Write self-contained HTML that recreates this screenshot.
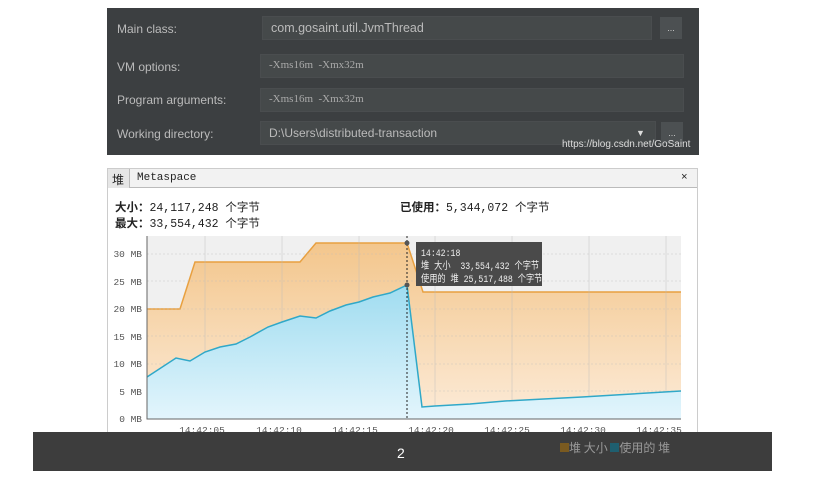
<!DOCTYPE html><html><head><meta charset="utf-8"><style>
*{margin:0;padding:0;box-sizing:border-box}
body{width:815px;height:483px;background:#fff;position:relative;overflow:hidden;font-family:"Liberation Sans","Noto Sans CJK SC",sans-serif}
.a{position:absolute}
.dk{left:107px;top:8px;width:592px;height:147px;background:#3c3f41}
.lb{color:#bbb;font-size:12px;left:117px}
.fd{background:#45494a;border:1px solid #4a4d4f;height:24px;color:#bbb;font-size:12px;padding:4px 8px}
.mono{font-family:"Liberation Serif","Noto Sans CJK SC",serif}
.bt{background:#4c5052;width:22px;height:22px;color:#ccc;font-size:9px;text-align:center;line-height:22px}
.cj{font-family:"Liberation Mono","Noto Sans CJK SC",monospace;font-size:11px;color:#222}
.tt{left:421px;width:200px;color:#eee;font-size:10px;line-height:13px;white-space:pre;font-family:"Liberation Mono","Noto Sans CJK SC",monospace;transform:scaleX(0.82);transform-origin:0 0}
</style></head><body>
<div class="a dk"></div>
<div class="a lb" style="top:22px">Main class:</div>
<div class="a fd" style="left:262px;top:16px;width:390px;font-size:12.5px">com.gosaint.util.JvmThread</div>
<div class="a bt" style="left:660px;top:17px">...</div>
<div class="a lb" style="top:60px">VM options:</div>
<div class="a fd mono" style="left:260px;top:54px;width:424px;color:#aaa;font-size:11px">-Xms16m &nbsp;-Xmx32m</div>
<div class="a lb" style="top:93px">Program arguments:</div>
<div class="a fd mono" style="left:260px;top:88px;width:424px;color:#aaa;font-size:11px">-Xms16m &nbsp;-Xmx32m</div>
<div class="a lb" style="top:127px">Working directory:</div>
<div class="a fd" style="left:260px;top:121px;width:396px">D:\Users\distributed-transaction</div>
<div class="a" style="left:636px;top:128px;color:#ddd;font-size:9px">▼</div>
<div class="a bt" style="left:661px;top:122px">...</div>
<div class="a" style="left:562px;top:139px;color:#ddd;font-size:10px">https://blog.csdn.net/GoSaint</div>

<div class="a" style="left:107px;top:168px;width:591px;height:303px;border:1px solid #ccc"></div>
<div class="a" style="left:108px;top:169px;width:589px;height:19px;background:#f2f2f2;border-bottom:1px solid #bbb"></div>
<div class="a cj" style="left:108px;top:169px;width:22px;height:19px;border-right:1px solid #bbb;background:#e6e6e6;padding:2px 4px;font-size:12px">堆</div>
<div class="a cj" style="left:137px;top:172px">Metaspace</div>
<div class="a cj" style="left:681px;top:172px">×</div>
<div class="a cj" style="left:115px;top:199px;font-size:11.5px"><b>大小：</b>24,117,248 个字节</div>
<div class="a cj" style="left:115px;top:215px;font-size:11.5px"><b>最大：</b>33,554,432 个字节</div>
<div class="a cj" style="left:400px;top:199px;font-size:11.5px"><b>已使用：</b>5,344,072 个字节</div>

<svg class="a" style="left:0;top:0" width="815" height="483">
<defs>
<linearGradient id="o" x1="0" y1="0" x2="0" y2="1"><stop offset="0" stop-color="#f3c68c"/><stop offset="1" stop-color="#fcebd8"/></linearGradient>
<linearGradient id="b" x1="0" y1="0" x2="0" y2="1"><stop offset="0" stop-color="#9fdcf0"/><stop offset="1" stop-color="#e3f5fc"/></linearGradient>
</defs>
<rect x="147" y="236" width="534" height="183" fill="#f0f0f0"/>
<path d="M147,419V309H180L195,262H300L316,243H407L423,292H681V419Z" fill="url(#o)" stroke="none"/>
<path d="M147,309H180L195,262H300L316,243H407L423,292H681" fill="none" stroke="#e8a040" stroke-width="1.5"/>
<g stroke="#bbb" stroke-width="0.6" opacity="0.7">
<path d="M205,236V419M282,236V419M359,236V419M435,236V419M512,236V419M589,236V419M666,236V419"/>
<path d="M147,254H681M147,281H681M147,309H681M147,336H681M147,364H681M147,391H681" stroke-dasharray="2,2"/>
</g>
<path d="M147,377L176,358L190,361L205,352L220,347L236,344L250,337L268,327L282,322L300,316L316,318L330,311L346,305L359,302L373,297L390,293L407,285L422,407L435,406L470,404L505,401L582,397L681,391V419H147Z" fill="url(#b)"/>
<path d="M147,377L176,358L190,361L205,352L220,347L236,344L250,337L268,327L282,322L300,316L316,318L330,311L346,305L359,302L373,297L390,293L407,285L422,407L435,406L470,404L505,401L582,397L681,391" fill="none" stroke="#30a8c8" stroke-width="1.5"/>
<path d="M147,236V419H681" fill="none" stroke="#666"/>
<line x1="407" y1="236" x2="407" y2="419" stroke="#222" stroke-dasharray="2,2"/>
<circle cx="407" cy="243" r="2.5" fill="#555"/><circle cx="407" cy="285" r="2.5" fill="#555"/>
<g font-family="Liberation Mono,monospace" font-size="9.5" fill="#555" text-anchor="end">
<text x="142" y="257">30 MB</text><text x="142" y="285">25 MB</text><text x="142" y="312">20 MB</text><text x="142" y="340">15 MB</text><text x="142" y="367">10 MB</text><text x="142" y="395">5 MB</text><text x="142" y="422">0 MB</text>
</g>
<g font-family="Liberation Mono,monospace" font-size="9.5" fill="#555" text-anchor="middle">
<text x="202" y="433">14:42:05</text><text x="279" y="433">14:42:10</text><text x="355" y="433">14:42:15</text><text x="431" y="433">14:42:20</text><text x="507" y="433">14:42:25</text><text x="583" y="433">14:42:30</text><text x="659" y="433">14:42:35</text>
</g>
<rect x="416" y="242" width="126" height="44" fill="#4a4a4a"/>
</svg>
<div class="a tt" style="top:248px">14:42:18
堆 大小  33,554,432 个字节
使用的 堆 25,517,488 个字节</div>
<div class="a" style="left:33px;top:432px;width:739px;height:39px;background:#3d3d3d"></div>
<div class="a" style="left:397px;top:445px;color:#fff;font-size:14px">2</div>
<div class="a" style="left:560px;top:439px;color:#999;font-size:12px;font-family:'Noto Sans CJK SC',sans-serif;white-space:nowrap"><span style="display:inline-block;width:9px;height:9px;background:#7a5a20"></span>堆 大小 <span style="display:inline-block;width:9px;height:9px;background:#1f5f70"></span>使用的 堆</div>
</body></html>
